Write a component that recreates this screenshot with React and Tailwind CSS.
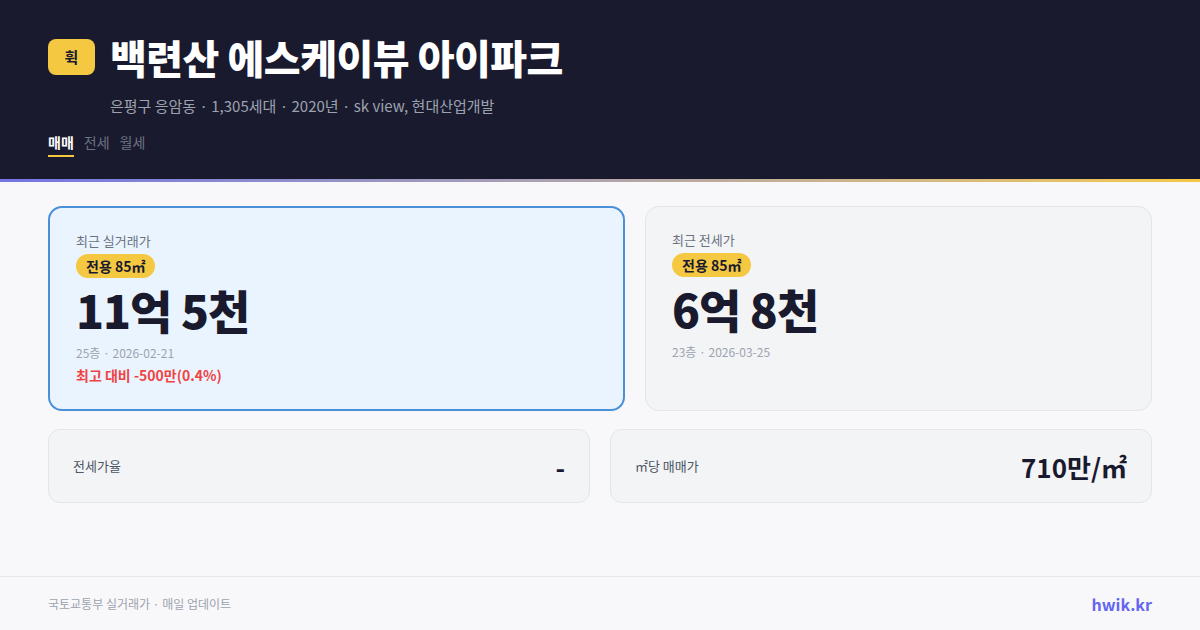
import React from 'react';

const font = { fontFamily: '"Noto Sans CJK KR", "Noto Sans", sans-serif' };

const PriceCard = ({ label, price, meta, diff, active }) => (
  <div className={active
    ? "w-[577px] rounded-[14px] border-2 border-[#4a90d9] bg-[#eaf4ff] px-[26px] pt-[24px] pb-[25px]"
    : "flex-1 rounded-[14px] border border-[#e3e5ea] bg-[#f3f4f6] px-[26px] pt-[24px] pb-[25px]"}>
    <div className="text-[13px] leading-[18px] text-[#6b7280]">{label}</div>
    <div className="mt-[4px] inline-flex items-center rounded-full bg-[#f5c842] px-[10px] h-[24px] text-[14px] font-bold text-[#1a1a2e]">전용 85㎡</div>
    <div className="mt-[3px] text-[46px] leading-[56px] font-black tracking-[-1px] text-[#1a1a2e]">{price}</div>
    <div className="mt-[8px] text-[12px] leading-[16px] text-[#9ca3af]">{meta}</div>
    {diff && <div className="mt-[5px] text-[14px] leading-[18px] font-semibold text-[#ef4444]">{diff}</div>}
  </div>
);

const StatCard = ({ label, value }) => (
  <div className="flex-1 h-[74px] rounded-[12px] border border-[#e3e5ea] bg-[#f3f4f6] px-6 flex items-center justify-between">
    <span className="text-[13px] text-[#4b5563]">{label}</span>
    <span className="text-[26px] font-bold text-[#1a1a2e]">{value}</span>
  </div>
);

export default function App() {
  return (
    <div style={font} className="w-[1200px] h-[630px] flex flex-col bg-[#f8f8fa] overflow-hidden">
      <header className="bg-[#1a1a2e] px-12 pt-[35px]">
        <div className="flex items-center gap-[15px]">
          <div className="w-[47px] h-[36px] rounded-[8px] bg-[#f5c842] flex items-center justify-center text-[15px] font-bold text-[#1a1a2e]">휙</div>
          <h1 className="text-[40px] leading-[44px] font-black tracking-[-0.5px] text-white">백련산 에스케이뷰 아이파크</h1>
        </div>
        <div className="mt-[17px] pl-[62px] text-[15px] leading-[20px] text-[#9ca3af]">은평구 응암동 · 1,305세대 · 2020년 · sk view, 현대산업개발</div>
        <div className="mt-[16px] flex gap-[10px] text-[14px] leading-[20px]">
          <span className="font-bold text-white border-b-2 border-[#f5c842] pb-[3px]">매매</span>
          <span className="text-[#6b7280]">전세</span>
          <span className="text-[#6b7280]">월세</span>
        </div>
        <div className="h-[22px]" />
      </header>
      <div className="h-[3px] bg-gradient-to-r from-[#7474e4] to-[#f5c842]" />
      <main className="flex-1 px-12 pt-[24px]">
        <div className="flex gap-5">
          <PriceCard active label="최근 실거래가" price="11억 5천" meta="25층 · 2026-02-21" diff="최고 대비 -500만(0.4%)" />
          <PriceCard label="최근 전세가" price="6억 8천" meta="23층 · 2026-03-25" />
        </div>
        <div className="mt-[18px] flex gap-5">
          <StatCard label="전세가율" value="-" />
          <StatCard label="㎡당 매매가" value="710만/㎡" />
        </div>
      </main>
      <footer className="h-[54px] border-t border-[#e5e7eb] px-12 flex items-center justify-between">
        <span className="text-[12px] text-[#9ca3af]">국토교통부 실거래가 · 매일 업데이트</span>
        <span className="text-[16px] font-bold text-[#6366f1]">hwik.kr</span>
      </footer>
    </div>
  );
}
